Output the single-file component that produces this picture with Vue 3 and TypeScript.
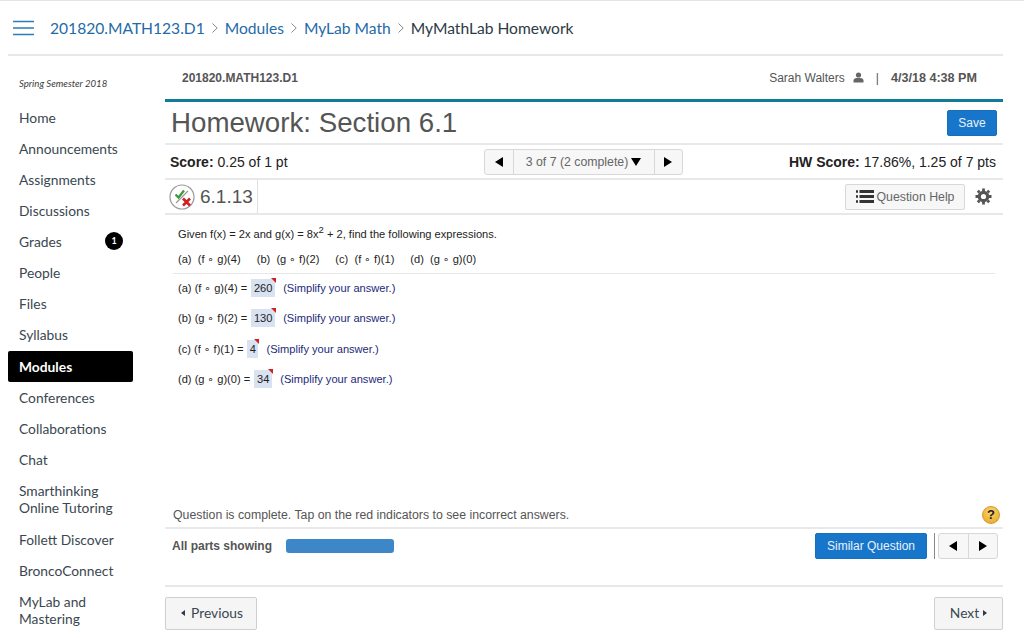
<script setup lang="ts">
const nav = ['Home','Announcements','Assignments','Discussions','Grades','People','Files','Syllabus','Modules','Conferences','Collaborations','Chat']
const nav2 = ['Follett Discover','BroncoConnect']
const parts = [
  { a: '(a)\u00a0 (f', b: 'g)(4)' },
  { a: '(b)\u00a0 (g', b: 'f)(2)' },
  { a: '(c)\u00a0 (f', b: 'f)(1)' },
  { a: '(d)\u00a0 (g', b: 'g)(0)' },
]
const answers = [
  { a: '(a) (f', b: 'g)(4) =', value: '260', w: 24 },
  { a: '(b) (g', b: 'f)(2) =', value: '130', w: 24 },
  { a: '(c) (f', b: 'f)(1) =', value: '4', w: 11 },
  { a: '(d) (g', b: 'g)(0) =', value: '34', w: 18 },
]
</script>

<template>
  <div class="page">
    <header class="crumbs">
      <svg class="burger" width="21" height="16" viewBox="0 0 21 16"><path d="M0 1.500H21M0 8H21M0 14.500H21" stroke="#2d7cb5" stroke-width="1.600" fill="none"/></svg>
      <a>201820.MATH123.D1</a>
      <svg class="chev" width="6" height="10" viewBox="0 0 6 10"><path d="M.5 .5 5.200 5 .5 9.500" stroke="#888" stroke-width="1" fill="none"/></svg>
      <a>Modules</a>
      <svg class="chev" width="6" height="10" viewBox="0 0 6 10"><path d="M.5 .5 5.200 5 .5 9.500" stroke="#888" stroke-width="1" fill="none"/></svg>
      <a>MyLab Math</a>
      <svg class="chev" width="6" height="10" viewBox="0 0 6 10"><path d="M.5 .5 5.200 5 .5 9.500" stroke="#888" stroke-width="1" fill="none"/></svg>
      <span>MyMathLab Homework</span>
    </header>
    <div class="body">
      <aside class="side">
        <div class="term">Spring Semester 2018</div>
        <nav>
          <div v-for="n in nav" :key="n" class="item" :class="{ active: n === 'Modules' }">
            {{ n }}<b v-if="n === 'Grades'" class="badge">1</b>
          </div>
          <div class="item two">Smarthinking<br>Online Tutoring</div>
          <div v-for="n in nav2" :key="n" class="item">{{ n }}</div>
          <div class="item two">MyLab and<br>Mastering</div>
        </nav>
      </aside>
      <main class="main">
        <div class="course">
          <strong class="cname">201820.MATH123.D1</strong>
          <div class="user">
            <span>Sarah Walters</span>
            <svg width="11" height="11" viewBox="0 0 11 11"><circle cx="5.500" cy="3" r="2.600" fill="#666"/><path d="M.5 10.500V8.500C.5 7 2 6.200 3.500 6H7.500C9 6.200 10.500 7 10.500 8.500V10.500Z" fill="#666"/></svg>
            <span class="pipe">|</span>
            <strong>4/3/18 4:38 PM</strong>
          </div>
        </div>
        <div class="title">
          <h1>Homework: Section 6.1</h1>
          <button class="blue save">Save</button>
        </div>
        <div class="score">
          <div class="sleft"><b>Score:</b> 0.25 of 1 pt</div>
          <div class="pager">
            <span class="pg arrow"><i class="tl"></i></span>
            <span class="pg mid">3 of 7 (2 complete)<i class="td"></i></span>
            <span class="pg arrow"><i class="tr"></i></span>
          </div>
          <div class="sright"><b>HW Score:</b> 17.86%, 1.25 of 7 pts</div>
        </div>
        <div class="qrow">
          <div class="qnum">
            <svg width="26" height="26" viewBox="0 0 26 26">
              <circle cx="13" cy="13" r="12" fill="#fff" stroke="#9a9a9a" stroke-width="1.200"/>
              <path d="M7 19 19 7" stroke="#999" stroke-width="1.200"/>
              <path d="M6.500 10.500 9.500 13.500 15 6.500" stroke="#3a9a3a" stroke-width="2.200" fill="none"/>
              <path d="M14 14.500 21 21.500M21 14.500 14 21.500" stroke="#d02020" stroke-width="2.600"/>
            </svg>
            <span>6.1.13</span>
          </div>
          <div class="qtools">
            <button class="help">
              <svg width="18" height="13" viewBox="0 0 18 13"><path d="M0 1.500H2M0 6.500H2M0 11.500H2" stroke="#333" stroke-width="2.400"/><path d="M3.500 1.500H18M3.500 6.500H18M3.500 11.500H18" stroke="#333" stroke-width="3"/></svg>
              Question Help
            </button>
            <svg class="gear" width="17" height="17" viewBox="0 0 17 17"><circle cx="8.500" cy="8.500" r="4.200" fill="none" stroke="#555" stroke-width="3.200"/><path d="M8.500 .5V3M8.500 14V16.500M.5 8.500H3M14 8.500H16.500M2.800 2.800 4.600 4.600M12.400 12.400 14.200 14.200M14.200 2.800 12.400 4.600M4.600 12.400 2.800 14.200" stroke="#555" stroke-width="2.800"/></svg>
          </div>
        </div>
        <div class="question">
          <p class="given">Given f(x) = 2x and g(x) = 8x<sup>2</sup> + 2, find the following expressions.</p>
          <p class="parts"><span v-for="p in parts" :key="p.a">{{ p.a }} <i class="ring">∘</i> {{ p.b }}</span></p>
          <div class="answers">
            <div v-for="a in answers" :key="a.a" class="ans">
              <span>{{ a.a }} <i class="ring">∘</i> {{ a.b }}</span>
              <span class="val" :style="{ width: a.w + 'px' }">{{ a.value }}<i class="flag"></i></span>
              <span class="hint">(Simplify your answer.)</span>
            </div>
          </div>
        </div>
        <div class="status">
          <span>Question is complete. Tap on the red indicators to see incorrect answers.</span>
          <span class="qmark">?</span>
        </div>
        <div class="foot">
          <b class="showing">All parts showing</b>
          <span class="bar"></span>
          <button class="blue similar">Similar Question</button>
          <span class="divider"></span>
          <div class="pager small">
            <span class="pg arrow"><i class="tl"></i></span>
            <span class="pg arrow"><i class="tr"></i></span>
          </div>
        </div>
        <div class="nextprev">
          <button class="np prev"><i class="sl"></i>Previous</button>
          <button class="np next">Next<i class="sr"></i></button>
        </div>
      </main>
    </div>
  </div>
</template>

<style>
html, body { margin: 0; background: #fff; }
</style>

<style scoped>
.page { width: 1024px; height: 638px; overflow: hidden; background: #fff; font-family: "Liberation Sans", sans-serif; border-top: 1px solid #e4e4e4; box-sizing: border-box; }
.crumbs { height: 53px; margin: 0 21px 0 8px; padding-left: 5px; border-bottom: 2px solid #e8e8e8; display: flex; align-items: center; font-family: Lato, sans-serif; font-size: 15.600px; color: #2d3b45; }
.burger { margin-right: 16px; }
.crumbs a { color: #1f6aa8; }
.chev { margin: 1px 7px 0; }
.body { display: flex; }
.side { width: 165px; flex: none; padding-left: 8px; box-sizing: border-box; font-family: Lato, sans-serif; }
.term { font-size: 9.600px; font-style: italic; color: #3a3a3a; padding: 22px 0 0 11px; height: 23.500px; line-height: 12px; }
.item { position: relative; height: 31.125px; line-height: 31px; padding-left: 11px; width: 125px; box-sizing: border-box; font-size: 13.800px; color: #3a4750; }
.item.active { background: #000; color: #fff; font-weight: 700; border-radius: 2px; }
.item.two { height: 49px; line-height: 17px; padding-top: 7px; }
.badge { position: absolute; left: 97px; top: 6px; width: 18px; height: 18px; border-radius: 50%; background: #000; color: #fff; font-size: 9px; line-height: 18px; text-align: center; }
.main { width: 838px; flex: none; display: flex; flex-direction: column; color: #333; }
.course { height: 43px; display: flex; justify-content: space-between; align-items: center; padding: 0 26px 0 17px; border-bottom: 3px solid #0f7c9c; }
.cname { font-size: 12px; color: #555; }
.user { display: flex; align-items: center; gap: 8px; font-size: 12px; color: #555; }
.user strong { font-size: 12.600px; }
.pipe { margin: 0 4px 0 4px; }
.title { height: 41px; display: flex; justify-content: space-between; align-items: center; padding: 0 6px; border-bottom: 2px solid #e8e8e8; }
h1 { margin: 0; font-size: 27.700px; font-weight: 400; color: #555; }
.blue { background: #1776c9; color: #e8f2fb; border: 1px solid #1470bd; border-radius: 2px; font-family: inherit; font-size: 12px; padding: 0; }
.save { width: 50px; height: 26px; margin-top: 1px; }
.score { height: 33px; display: grid; grid-template-columns: 1fr auto 1fr; align-items: center; padding: 0 7px 0 5px; border-bottom: 2px solid #e8e8e8; font-size: 14px; color: #222; }
.sright { text-align: right; }
.pager { display: flex; height: 26px; border: 1px solid #d8d8d8; border-radius: 3px; background: #f7f7f7; box-sizing: border-box; }
.pg { display: flex; align-items: center; justify-content: center; box-sizing: border-box; }
.arrow { width: 28px; }
.arrow + .mid, .mid + .arrow, .arrow + .arrow { border-left: 1px solid #d8d8d8; }
.mid { width: 141px; font-size: 12.300px; color: #666; gap: 3px; }
.tl { border: 5.500px solid transparent; border-left: 0; border-right: 8px solid #000; }
.tr { border: 5.500px solid transparent; border-right: 0; border-left: 8px solid #000; }
.td { border: 5.500px solid transparent; border-bottom: 0; border-top: 8px solid #000; }
.qrow { height: 33px; display: flex; justify-content: space-between; align-items: stretch; border-bottom: 2px solid #e8e8e8; }
.qnum { width: 93px; display: flex; align-items: center; gap: 5px; padding-left: 4px; border-right: 1px solid #e0e0e0; box-sizing: border-box; font-size: 19px; color: #555; }
.qtools { display: flex; align-items: center; gap: 10px; padding-right: 11px; }
.help { width: 120px; height: 26px; background: #f7f7f7; border: 1px solid #d8d8d8; border-radius: 2px; font-family: inherit; font-size: 12.300px; color: #666; display: flex; align-items: center; justify-content: center; gap: 3px; padding: 0; }
.question { height: 287px; padding: 0 8px; font-size: 11.100px; color: #222; box-sizing: border-box; }
.given { margin: 0; padding: 12px 0 0 5px; height: 31px; line-height: 14px; box-sizing: border-box; }
.given sup { font-size: 9.500px; line-height: 0; }
.parts { margin: 0; height: 28px; padding: 6px 0 0 5px; line-height: 14px; border-bottom: 1px solid #e8e8e8; display: flex; gap: 16px; box-sizing: border-box; }
.ring { font-family: "DejaVu Sans", sans-serif; font-style: normal; font-size: 10.500px; line-height: 0; }
.answers { padding: 5px 0 0 5px; }
.ans { height: 30.400px; display: flex; align-items: flex-start; gap: 4px; line-height: 18px; }
.val { position: relative; height: 18px; background: #d8e2f0; text-align: center; color: #222; display: block; }
.flag { position: absolute; right: -1px; top: -1px; border-top: 5px solid #d02020; border-left: 5px solid transparent; }
.hint { color: #1c2a7a; margin-left: 4px; }
.status { height: 27px; display: flex; justify-content: space-between; align-items: center; padding: 0 3px 0 8px; border-bottom: 2px solid #e8e8e8; box-sizing: border-box; font-size: 12.300px; color: #555; }
.qmark { width: 18px; height: 18px; border: 1px solid #d09a2a; box-sizing: border-box; border-radius: 50%; background: radial-gradient(circle at 50% 30%, #fbd56f, #e8a51f); color: #222; font-weight: 700; font-size: 13px; line-height: 16px; text-align: center; }
.foot { height: 52px; display: flex; align-items: flex-start; padding: 4px 5px 0 7px; border-bottom: 2px solid #e8e8e8; }
.showing { font-size: 12px; color: #555; line-height: 26px; width: 114px; }
.bar { width: 108px; height: 14px; margin-top: 6px; background: #3d87c9; border-radius: 3px; }
.similar { width: 112px; height: 26px; margin-left: auto; }
.divider { width: 1px; height: 26px; background: #888; margin: 0 3px 0 7px; }
.small { width: 60px; }
.small .arrow { flex: 1; }
.nextprev { display: flex; justify-content: space-between; padding-top: 10px; }
.np { height: 33px; background: #f5f5f5; border: 1px solid #cfcfcf; border-radius: 2px; font-family: Lato, sans-serif; font-size: 13.800px; color: #3a4750; display: flex; align-items: center; justify-content: center; padding: 0 0 2px; }
.prev { width: 92px; padding-left: 2px; }
.next { width: 69px; }
.sl { border: 3px solid transparent; border-left: 0; border-right: 4px solid #2d3b45; margin-right: 6px; }
.sr { border: 3px solid transparent; border-right: 0; border-left: 4px solid #2d3b45; margin-left: 4px; }
</style>
